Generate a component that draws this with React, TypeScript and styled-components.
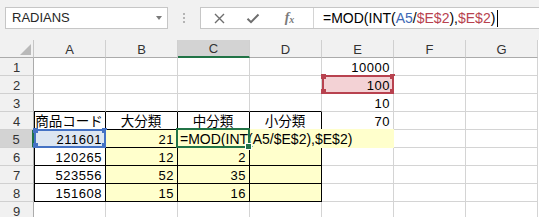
import styled, { createGlobalStyle } from "styled-components";

const GlobalStyle = createGlobalStyle`
  html, body {
    margin: 0;
    padding: 0;
    background: #ffffff;
    overflow: hidden;
  }
  body {
    font-family: "Liberation Sans", "Noto Sans CJK JP", sans-serif;
    color: #000;
  }
`;

const COLS = ["A", "B", "C", "D", "E", "F", "G"];
const ROWS = [1, 2, 3, 4, 5, 6, 7, 8, 9];
const YELLOW = "#ffffcc";

type Mark = "blue" | "red";
type CellSpec = {
  v?: string;
  align?: "left" | "center" | "right";
  fill?: string;
  boxed?: boolean;
  mark?: Mark;
  editing?: boolean;
};

// 表のデータ
const data: Record<string, CellSpec> = {
  E1: { v: "10000" },
  E2: { v: "100", mark: "red" },
  E3: { v: "10" },
  E4: { v: "70" },
  A4: { v: "商品コード", align: "center", boxed: true },
  B4: { v: "大分類", align: "center", boxed: true },
  C4: { v: "中分類", align: "center", boxed: true },
  D4: { v: "小分類", align: "center", boxed: true },
  A5: { v: "211601", boxed: true, mark: "blue" },
  B5: { v: "21", boxed: true, fill: YELLOW },
  C5: { boxed: true, fill: YELLOW, editing: true },
  D5: { boxed: true, fill: YELLOW },
  A6: { v: "120265", boxed: true },
  B6: { v: "12", boxed: true, fill: YELLOW },
  C6: { v: "2", boxed: true, fill: YELLOW },
  D6: { boxed: true, fill: YELLOW },
  A7: { v: "523556", boxed: true },
  B7: { v: "52", boxed: true, fill: YELLOW },
  C7: { v: "35", boxed: true, fill: YELLOW },
  D7: { boxed: true, fill: YELLOW },
  A8: { v: "151608", boxed: true },
  B8: { v: "15", boxed: true, fill: YELLOW },
  C8: { v: "16", boxed: true, fill: YELLOW },
  D8: { boxed: true, fill: YELLOW },
};

const markColors: Record<Mark, { line: string; fill: string }> = {
  blue: { line: "#4472c4", fill: "#dce6f2" },
  red: { line: "#b8424f", fill: "#f3d2d5" },
};

const Formula = () => (
  <>
    =MOD(INT(<Blue>A5</Blue>/<Red>$E$2</Red>),<Red>$E$2</Red>)
  </>
);

const App = () => {
  return (
    <Wrapper>
      <GlobalStyle />
      {/* 数式バー */}
      <TopBar>
        <NameBox>
          RADIANS
          <DropArrow />
        </NameBox>
        <Grip>
          <i />
          <i />
          <i />
        </Grip>
        <FormulaBox>
          <ToolButton>
            <svg width="11" height="11" viewBox="0 0 11 11">
              <path d="M1 1L10 10M10 1L1 10" stroke="#6e6e6e" strokeWidth="1.4" fill="none" />
            </svg>
          </ToolButton>
          <ToolButton>
            <svg width="14" height="11" viewBox="0 0 14 11">
              <path d="M1.5 5.8L5 9.2L12.5 1.5" stroke="#6e6e6e" strokeWidth="2" fill="none" />
            </svg>
          </ToolButton>
          <FxButton>
            <em>f</em>
            <small>x</small>
          </FxButton>
          <FormulaInput>
            <Formula />
            <Caret />
          </FormulaInput>
        </FormulaBox>
      </TopBar>

      {/* シート */}
      <Sheet>
        <Corner>
          <CornerTriangle />
        </Corner>
        {COLS.map((c) => (
          <ColHeader key={c} $selected={c === "C"}>
            {c}
          </ColHeader>
        ))}
        {ROWS.map((r) => (
          <Row key={r} r={r} />
        ))}
      </Sheet>
    </Wrapper>
  );
};

const Row = ({ r }: { r: number }) => (
  <>
    <RowHeader $selected={r === 5}>{r}</RowHeader>
    {COLS.map((c) => {
      const spec = data[c + r] ?? {};
      const below = data[c + (r + 1)];
      return (
        <Cell
          key={c}
          $fill={spec.fill}
          $boxed={spec.boxed}
          $edgeBottom={!!below?.boxed}
          $edgeLeft={c === "A" && spec.boxed}
          $align={spec.align ?? "right"}
          $cjk={spec.align === "center"}
        >
          {spec.mark && <RefBox $mark={spec.mark} />}
          {spec.v && <CellText>{spec.v}</CellText>}
          {spec.editing && (
            <>
              <Editor>=MOD(INT(A5/$E$2),$E$2)</Editor>
              <ActiveFrame>
                <FillHandle />
              </ActiveFrame>
            </>
          )}
        </Cell>
      );
    })}
  </>
);

const Wrapper = styled.div`
  width: 539px;
  height: 217px;
  overflow: hidden;
  background: #ffffff;
`;

const TopBar = styled.div`
  height: 40px;
  box-sizing: border-box;
  background: #f1f1f1;
  display: flex;
  align-items: flex-start;
  padding: 7px 0 0 5px;
`;

const NameBox = styled.div`
  position: relative;
  width: 163px;
  height: 22px;
  box-sizing: border-box;
  background: #fff;
  border: 1px solid #c6c6c6;
  padding-left: 6px;
  font-size: 13px;
  line-height: 20px;
  color: #262626;
  display: flex;
  align-items: center;
`;

const DropArrow = styled.span`
  position: absolute;
  right: 5px;
  top: 8px;
  width: 0;
  height: 0;
  border-left: 3.5px solid transparent;
  border-right: 3.5px solid transparent;
  border-top: 4px solid #7a7a7a;
`;

const Grip = styled.div`
  width: 32px;
  height: 22px;
  display: flex;
  flex-direction: column;
  align-items: center;
  justify-content: center;
  gap: 2px;

  i {
    display: block;
    width: 2px;
    height: 2px;
    background: #b4b4b4;
  }
`;

const FormulaBox = styled.div`
  flex: 1;
  height: 22px;
  box-sizing: border-box;
  background: #fff;
  border: 1px solid #c6c6c6;
  border-right: none;
  display: flex;
  align-items: stretch;
  padding-left: 1px;
`;

const ToolButton = styled.div`
  width: 34px;
  display: flex;
  align-items: center;
  justify-content: center;
`;

const FxButton = styled.div`
  width: 43px;
  display: flex;
  align-items: center;
  justify-content: center;
  padding-right: 4px;
  box-sizing: border-box;
  color: #7a7a7a;
  font-family: "Liberation Serif", serif;

  em {
    font-size: 14px;
    font-style: italic;
    font-weight: bold;
  }
  small {
    font-size: 10px;
    font-style: italic;
    font-weight: bold;
    margin-top: 3px;
  }
`;

const FormulaInput = styled.div`
  flex: 1;
  border-left: 1px solid #d4d4d4;
  padding-left: 9px;
  font-size: 14px;
  line-height: 20px;
  color: #000;
  white-space: nowrap;
  display: flex;
  align-items: center;
`;

const Blue = styled.span`
  color: #3d68b5;
`;

const Red = styled.span`
  color: #b8424f;
`;

const Caret = styled.span`
  display: inline-block;
  width: 1px;
  height: 17px;
  background: #000;
  margin-left: 2px;
`;

const Sheet = styled.div`
  display: grid;
  grid-template-columns: 34px repeat(7, 72px);
  grid-auto-rows: 18px;
`;

const Corner = styled.div`
  position: relative;
  box-sizing: border-box;
  background: #f1f1f1;
  border-right: 1px solid #c6c6c6;
  border-bottom: 1px solid #ababab;
`;

const CornerTriangle = styled.span`
  position: absolute;
  right: 2px;
  bottom: 2px;
  width: 0;
  height: 0;
  border-left: 11px solid transparent;
  border-bottom: 11px solid #b9b9b9;
`;

const ColHeader = styled.div<{ $selected?: boolean }>`
  box-sizing: border-box;
  background: ${(p) => (p.$selected ? "#d3d3d3" : "#f1f1f1")};
  border-right: 1px solid #d0d0d0;
  border-bottom: ${(p) => (p.$selected ? "2px solid #217346" : "1px solid #ababab")};
  display: flex;
  align-items: center;
  justify-content: center;
  font-size: 13px;
  color: #333;
  padding-top: 1px;
`;

const RowHeader = styled.div<{ $selected?: boolean }>`
  box-sizing: border-box;
  background: ${(p) => (p.$selected ? "#d3d3d3" : "#f1f1f1")};
  border-right: ${(p) => (p.$selected ? "2px solid #217346" : "1px solid #ababab")};
  border-bottom: 1px solid #d0d0d0;
  display: flex;
  align-items: flex-end;
  justify-content: center;
  font-size: 13px;
  line-height: 12px;
  padding-bottom: 1px;
  color: #333;
`;

const Cell = styled.div<{
  $fill?: string;
  $boxed?: boolean;
  $edgeBottom?: boolean;
  $edgeLeft?: boolean;
  $align: "left" | "center" | "right";
  $cjk?: boolean;
}>`
  position: relative;
  box-sizing: border-box;
  background: ${(p) => p.$fill ?? "#ffffff"};
  border-right: 1px solid ${(p) => (p.$boxed ? "#000" : "#d4d4d4")};
  border-bottom: 1px solid ${(p) => (p.$boxed || p.$edgeBottom ? "#000" : "#d4d4d4")};
  box-shadow: ${(p) => (p.$edgeLeft ? "inset 1px 0 #000" : "none")};
  display: flex;
  align-items: flex-end;
  justify-content: ${(p) =>
    p.$align === "center" ? "center" : p.$align === "left" ? "flex-start" : "flex-end"};
  padding: 0 3px 1px 2px;
  font-size: ${(p) => (p.$cjk ? "13.5px" : "13px")};
  letter-spacing: ${(p) => (p.$cjk ? "0" : "0.5px")};
  line-height: 12px;
  white-space: nowrap;
`;

const CellText = styled.span`
  position: relative;
`;

const RefBox = styled.span<{ $mark: Mark }>`
  position: absolute;
  left: 0;
  top: -1px;
  right: -1px;
  bottom: -1px;
  background: ${(p) => markColors[p.$mark].fill};
  border: 2px solid ${(p) => markColors[p.$mark].line};
  box-sizing: border-box;

  &::before,
  &::after {
    content: "";
    position: absolute;
    top: -3px;
    width: 5px;
    height: 5px;
    background: ${(p) => markColors[p.$mark].line};
    box-shadow: 0 15px 0 ${(p) => markColors[p.$mark].line};
  }
  &::before {
    left: -3px;
  }
  &::after {
    right: -3px;
  }
`;

const Editor = styled.div`
  position: absolute;
  left: -1px;
  top: -1px;
  width: 217px;
  height: 19px;
  background: ${YELLOW};
  z-index: 2;
  padding-left: 3px;
  box-sizing: border-box;
  font-size: 14px;
  line-height: 18px;
  letter-spacing: 0;
  color: #000;
  display: flex;
  align-items: center;
  justify-content: flex-start;
`;

const ActiveFrame = styled.div`
  position: absolute;
  left: -2px;
  top: -2px;
  right: -1px;
  bottom: -1px;
  border: 2px solid #217346;
  z-index: 3;
  pointer-events: none;
`;

const FillHandle = styled.span`
  position: absolute;
  right: -4px;
  bottom: -4px;
  width: 5px;
  height: 5px;
  background: #217346;
  border: 1px solid #fff;
`;

export default App;
